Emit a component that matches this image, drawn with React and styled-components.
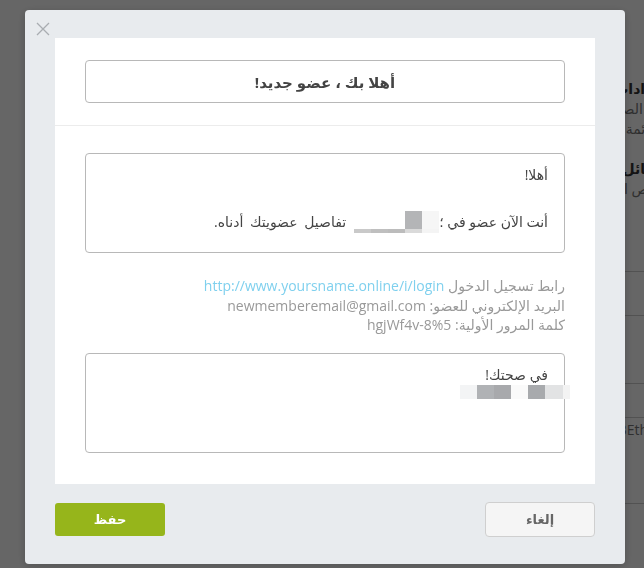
import React from "react";
import styled, { createGlobalStyle } from "styled-components";

const GlobalStyle = createGlobalStyle`
  html, body {
    margin: 0;
    padding: 0;
    height: 100%;
    overflow: hidden;
    background: #ffffff;
    font-family: "Open Sans", "DejaVu Sans", sans-serif;
  }
  #root {
    height: 100%;
  }
`;

/* page behind the dialog */

const Page = styled.div`
  display: flex;
  justify-content: flex-start;
  height: 100%;
  background: #ffffff;
`;

const SideColumn = styled.div`
  width: 240px;
  margin-right: -34px;
  display: flex;
  flex-direction: column;
  padding-top: 79px;
  text-align: right;
  white-space: nowrap;
`;

const SideHeading = styled.div`
  font-size: 14px;
  line-height: 20px;
  font-weight: 700;
  color: #333;
  margin-top: ${(p) => p.$gap || 0}px;
`;

const SideText = styled.div`
  font-size: 14px;
  line-height: 20px;
  color: #777;
  margin-top: ${(p) => p.$gap || 0}px;
  padding-right: ${(p) => p.$inset || 0}px;
`;

const SideRule = styled.div`
  height: 1px;
  background: #ccc;
  margin-top: ${(p) => p.$gap}px;
`;

/* dialog */

const Overlay = styled.div`
  position: fixed;
  inset: 0;
  background: rgba(0, 0, 0, 0.6);
  display: flex;
  align-items: flex-start;
  padding: 10px 0 0 25px;
`;

const Modal = styled.div`
  position: relative;
  width: 600px;
  background: #e8ebee;
  border-radius: 4px;
  padding: 28px 30px 27px;
  box-sizing: border-box;
  box-shadow: 0 2px 8px rgba(0, 0, 0, 0.2);
`;

const CloseButton = styled.button`
  position: absolute;
  top: 11px;
  left: 10px;
  width: 16px;
  height: 16px;
  padding: 0;
  border: 0;
  background: transparent;
  cursor: pointer;
  svg {
    display: block;
  }
`;

const Panel = styled.div`
  background: #ffffff;
`;

const PanelHeader = styled.div`
  padding: 22px 30px;
  border-bottom: 1px solid #ececec;
`;

const TitleBox = styled.div`
  height: 43px;
  border: 1px solid #b8b8b8;
  border-radius: 4px;
  box-sizing: border-box;
  display: flex;
  align-items: center;
  justify-content: center;
  font-size: 15px;
  font-weight: 700;
  color: #444;
`;

const PanelBody = styled.div`
  padding: 27px 30px 31px;
  display: flex;
  flex-direction: column;
`;

const MessageBox = styled.div`
  height: 100px;
  box-sizing: border-box;
  border: 1px solid #b8b8b8;
  border-radius: 4px;
  padding: ${(p) => p.$pad}px 16px 0;
  font-size: 14px;
  line-height: 20px;
  color: #444;
`;

const Para = styled.p`
  margin: 0 0 ${(p) => p.$after || 0}px;
  display: flex;
  align-items: center;
`;

const Wide = styled.span`
  word-spacing: 3px;
  letter-spacing: 0.3px;
`;

const Mosaic = styled.span`
  display: inline-grid;
  direction: ltr;
  grid-template-columns: ${(p) => p.$cols};
  margin: 0 ${(p) => p.$pull || 0}px 0 8px;
`;

const Cell = styled.span`
  display: block;
  height: ${(p) => p.$h}px;
  background: ${(p) => p.$c};
`;

const InfoList = styled.div`
  margin: 23px 0 18px;
  font-size: 14px;
  line-height: 19.5px;
  color: #999;
  text-align: right;
`;

const Link = styled.a`
  color: #7fd0ee;
  text-decoration: none;
`;

const Footer = styled.div`
  display: flex;
  justify-content: space-between;
  align-items: center;
  padding-top: 18px;
`;

const Button = styled.button`
  width: 110px;
  height: ${(p) => (p.$primary ? 33 : 35)}px;
  border-radius: ${(p) => (p.$primary ? 3 : 4)}px;
  border: ${(p) => (p.$primary ? "0" : "1px solid #cfcfcf")};
  background: ${(p) => (p.$primary ? "#96b51b" : "#f5f5f5")};
  color: ${(p) => (p.$primary ? "#ffffff" : "#666")};
  font-family: "Open Sans", "DejaVu Sans", sans-serif;
  font-size: 13px;
  font-weight: 700;
  cursor: pointer;
`;

const mosaicOne = {
  cols: "repeat(5, 17px)",
  heights: [18, 4],
  rows: [
    ["#fff", "#fff", "#fff", "#b4b5b7", "#f6f6f6"],
    ["#c9c9c9", "#bfbfbf", "#bcbcbc", "#dadada", "#f4f4f4"],
  ],
};

const mosaicTwo = {
  cols: "17px 17px 17px 17px 17px 18px 7px",
  heights: [14],
  rows: [["#f3f4f5", "#b0b2b5", "#a8a9ac", "#fafafa", "#a8aaad", "#e2e3e4", "#f3f3f3"]],
};

const Redacted = ({ data, pull }) => (
  <Mosaic $cols={data.cols} $pull={pull}>
    {data.rows.map((row, r) =>
      row.map((c, i) => <Cell key={r + "-" + i} $c={c} $h={data.heights[r]} />)
    )}
  </Mosaic>
);

export default function App() {
  return (
    <>
      <GlobalStyle />
      <Page dir="rtl">
        <SideColumn>
          <SideHeading>الإعدادات الافتراضية للعضوية</SideHeading>
          <SideText>تحديد الصفحة الرئيسية</SideText>
          <SideText>من قائمة الصفحات</SideText>
          <SideHeading $gap={20}>الرسائل والتنبيهات</SideHeading>
          <SideText>تخصيص التسجيل</SideText>
          <SideRule $gap={72} />
          <SideRule $gap={43} />
          <SideRule $gap={67} />
          <SideRule $gap={33} />
          <SideText dir="ltr" $gap={2} $inset={30}>0x92BEth</SideText>
          <SideRule $gap={63} />
        </SideColumn>
      </Page>

      <Overlay>
        <Modal dir="rtl">
          <CloseButton aria-label="close">
            <svg width="16" height="16" viewBox="0 0 16 16">
              <path d="M2 2 L14 14 M14 2 L2 14" stroke="#a9adb1" strokeWidth="1.3" fill="none" />
            </svg>
          </CloseButton>
          <Panel>
            <PanelHeader>
              <TitleBox>أهلا بك ، عضو جديد!</TitleBox>
            </PanelHeader>
            <PanelBody>
              <MessageBox $pad={11}>
                <Para $after={26}>أهلا!</Para>
                <Para>
                  أنت الآن عضو في ؛
                  <Redacted data={mosaicOne} />
                  <Wide>تفاصيل عضويتك أدناه.</Wide>
                </Para>
              </MessageBox>
              <InfoList>
                <div>
                  رابط تسجيل الدخول <Link href="#">http://www.yoursname.online/i/login</Link>
                </div>
                <div>البريد الإلكتروني للعضو: newmemberemail@gmail.com</div>
                <div>كلمة المرور الأولية: hgjWf4v-8%5</div>
              </InfoList>
              <MessageBox $pad={11}>
                <Para>في صحتك!</Para>
                <Para>
                  <Redacted data={mosaicTwo} pull={-22} />
                </Para>
              </MessageBox>
            </PanelBody>
          </Panel>
          <Footer>
            <Button>إلغاء</Button>
            <Button $primary>حفظ</Button>
          </Footer>
        </Modal>
      </Overlay>
    </>
  );
}
